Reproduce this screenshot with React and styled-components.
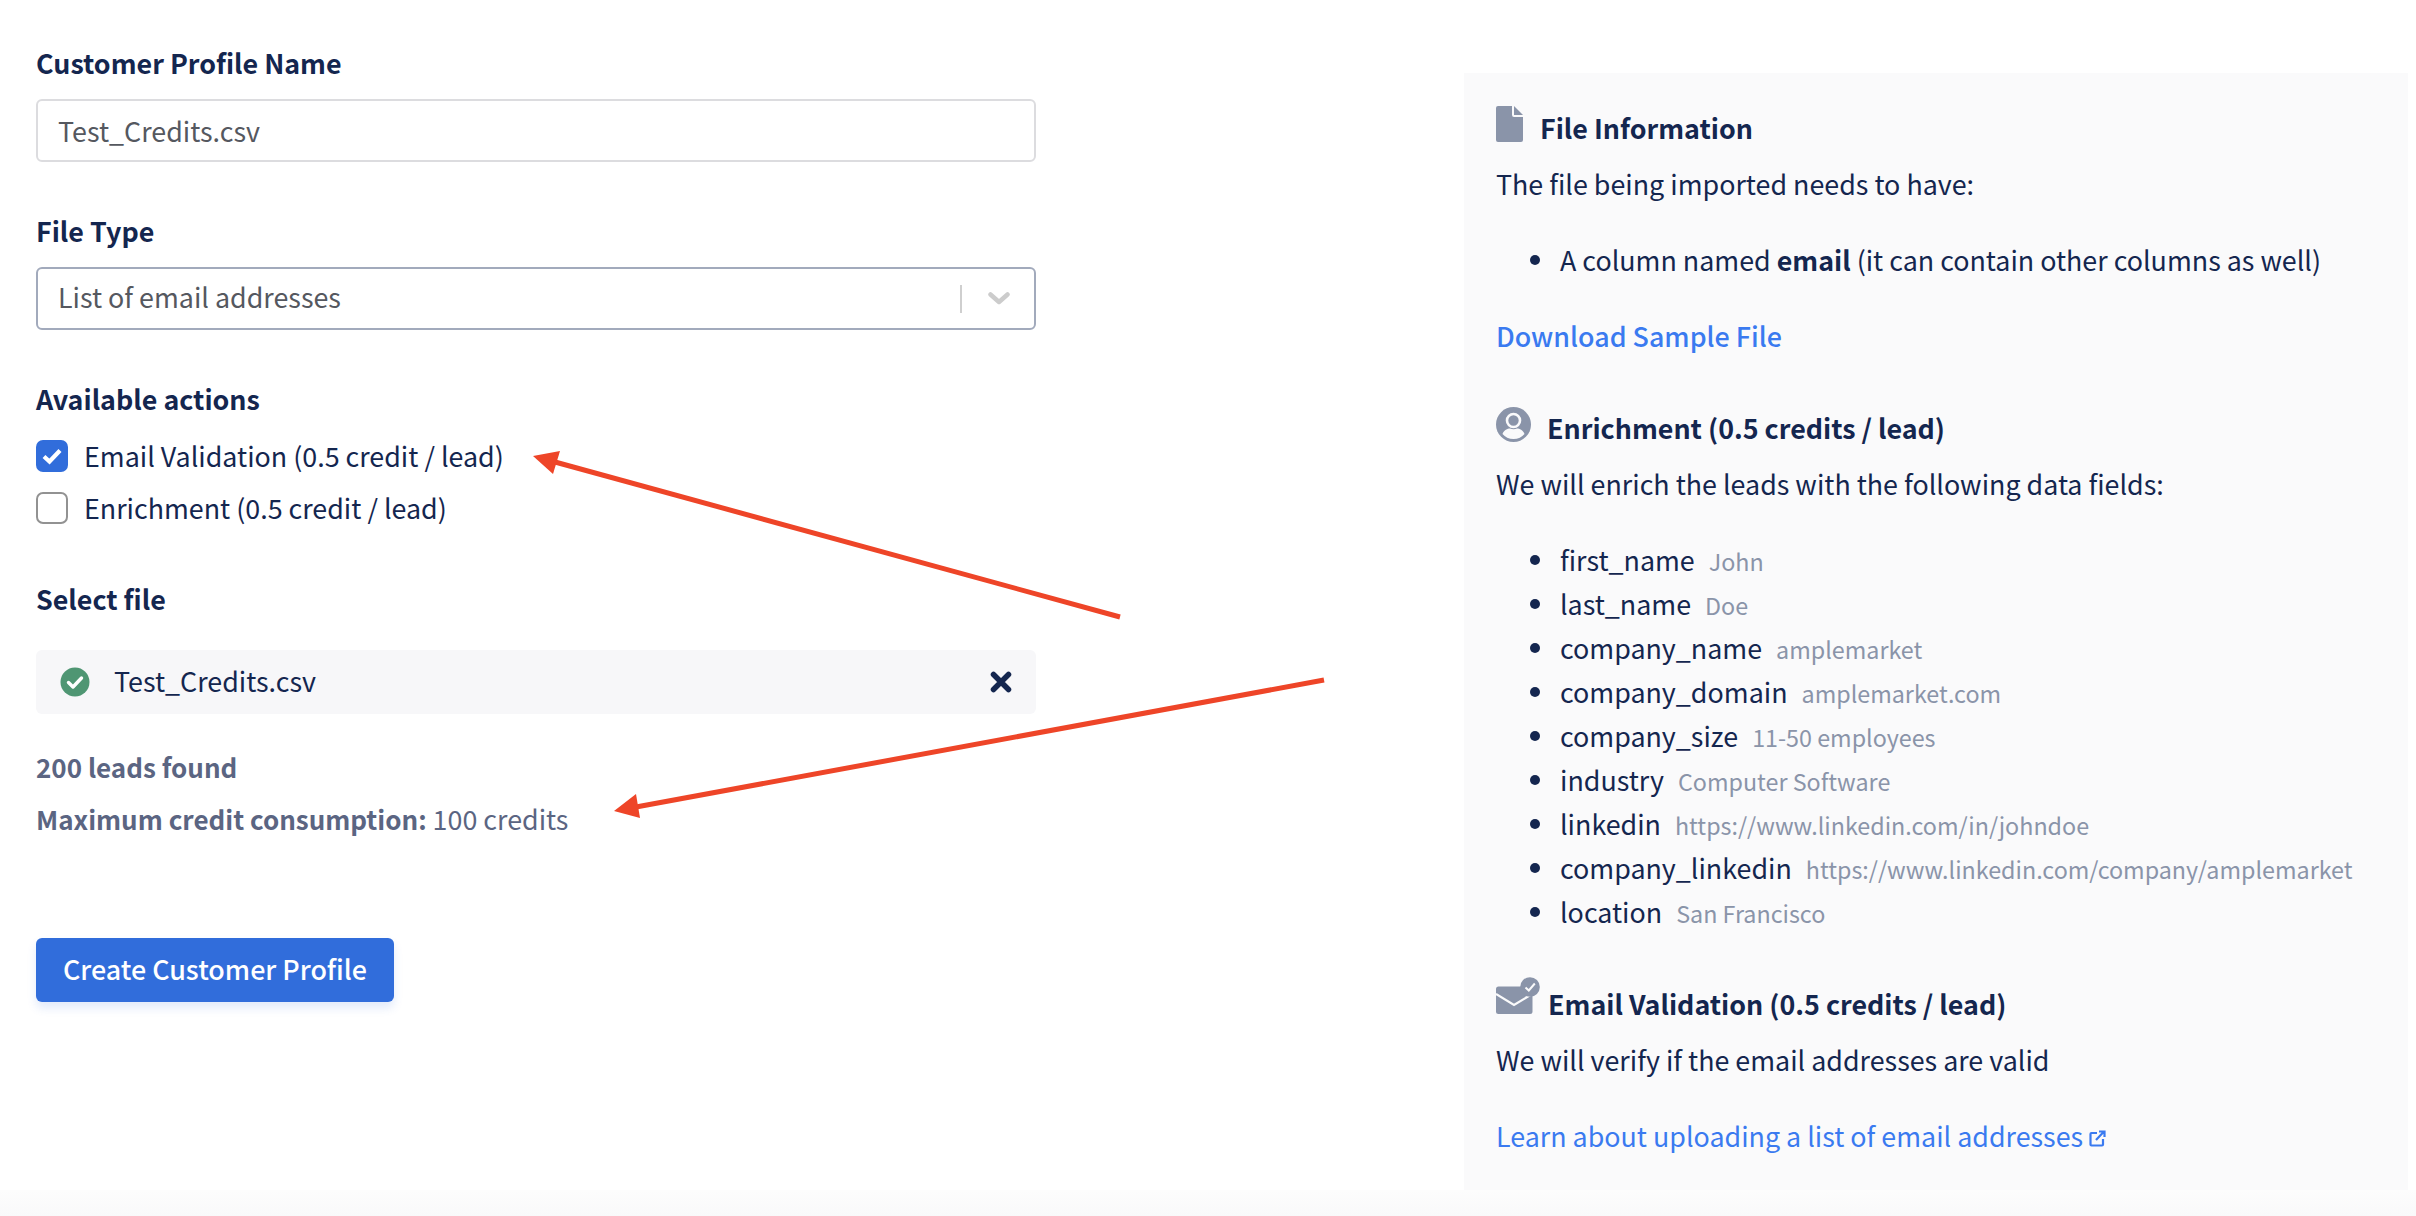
import React from 'react'
import styled, { createGlobalStyle } from 'styled-components'

const navy = '#14264f'
const muted = '#8a94a9'
const link = '#3a7af0'

const GlobalStyle = createGlobalStyle`
  html, body {
    margin: 0;
    padding: 0;
    background: #fff;
  }
  body {
    font-family: "Noto Sans CJK SC", "Noto Sans", sans-serif;
    font-size: 26.85px;
    line-height: 36px;
    color: ${navy};
  }
  * {
    box-sizing: border-box;
  }
`

const Page = styled.div`
  position: relative;
  width: 2416px;
  height: 1216px;
  overflow: hidden;
  display: flex;
  flex-direction: column;
`

const Columns = styled.div`
  display: flex;
  justify-content: space-between;
  padding: 0 8px 0 36px;
  height: 1190px;
`

const FormColumn = styled.div`
  width: 1000px;
  padding-top: 45px;
`

const BottomFade = styled.div`
  flex: 1;
  background: linear-gradient(#fdfdfd, #f9f9fa);
`

const Label = styled.div`
  font-weight: 700;
  line-height: 36px;
  margin-top: ${p => p.$top || 0}px;
`

const TextInput = styled.input`
  display: block;
  width: 100%;
  height: 63px;
  margin-top: 18px;
  padding: 0 20px;
  border: 2px solid #dcdcdf;
  border-radius: 6px;
  outline: none;
  background: #fff;
  font: inherit;
  color: #55585f;
`

const SelectBox = styled.div`
  display: flex;
  align-items: center;
  height: 63px;
  margin-top: 18px;
  padding: 0 24px 0 20px;
  border: 2px solid #a2aabc;
  border-radius: 6px;
  color: #55585f;
`

const SelectValue = styled.span`
  flex: 1;
  margin-bottom: 3px;
`

const Separator = styled.span`
  width: 2px;
  height: 28px;
  margin-right: 26px;
  background: #cfcfcf;
`

const Checks = styled.div`
  display: flex;
  flex-direction: column;
  gap: 20px;
  margin-top: 23px;
`

const CheckRow = styled.label`
  display: flex;
  align-items: center;
  gap: 16px;
  height: 32px;
`

const CheckBox = styled.span`
  display: flex;
  align-items: center;
  justify-content: center;
  width: 32px;
  height: 32px;
  border-radius: 7px;
  background: ${p => (p.$checked ? '#316ddb' : '#fff')};
  border: ${p => (p.$checked ? 'none' : '2px solid #929292')};
`

const FileRow = styled.div`
  display: flex;
  align-items: center;
  height: 64px;
  margin-top: 33px;
  padding: 0 24px;
  border-radius: 6px;
  background: #f7f7f9;
`

const FileName = styled.span`
  flex: 1;
  margin-left: 24px;
  margin-bottom: 3px;
`

const Summary = styled.div`
  color: #5b6582;
  line-height: 36px;
  margin-top: ${p => p.$top}px;

  b {
    font-weight: 700;
    font-size: 26px;
  }
`

const PrimaryButton = styled.button`
  display: block;
  width: 358px;
  height: 64px;
  margin-top: 101px;
  padding: 0 0 3px;
  border: none;
  border-radius: 6px;
  background: #316ddb;
  box-shadow: 0 6px 10px rgba(49, 109, 219, 0.14);
  color: #fff;
  font: inherit;
  font-weight: 500;
`

const InfoPanel = styled.aside`
  width: 944px;
  height: 1117px;
  margin-top: 73px;
  padding: 33px 32px 36px;
  background: #fafafb;
`

const SectionHead = styled.div`
  display: flex;
  align-items: flex-start;
  gap: ${p => p.$gap}px;
  margin-top: ${p => p.$top || 0}px;
`

const SectionTitle = styled.h3`
  margin: 0;
  padding-top: ${p => p.$drop}px;
  font-size: 26.85px;
  font-weight: 700;
  line-height: 36px;
`

const Para = styled.p`
  margin: 20px 0 0;
  line-height: 36px;
`

const BulletList = styled.ul`
  margin: ${p => p.$top}px 0 0;
  padding: 0 0 0 64px;
  list-style: none;
`

const Bullet = styled.li`
  position: relative;
  line-height: ${p => p.$height}px;
  white-space: nowrap;

  &::before {
    content: '';
    position: absolute;
    left: -30px;
    top: calc(50% - 5px);
    width: 10px;
    height: 10px;
    border-radius: 50%;
    background: ${navy};
  }

  b {
    font-weight: 700;
  }
`

const Example = styled.span`
  margin-left: 14px;
  font-size: 23.3px;
  line-height: 1;
  color: ${muted};
`

const InfoLink = styled.a`
  display: block;
  margin-top: 40px;
  line-height: 36px;
  color: ${link};
  font-weight: ${p => (p.$strong ? 500 : 400)};
`

const ArrowLayer = styled.svg`
  position: absolute;
  left: 0;
  top: 0;
  pointer-events: none;
`

const Tick = () => (
  <svg width="22" height="18" viewBox="0 0 22 18">
    <path d="M3 9.5l5.5 5L19 3.5" fill="none" stroke="#fff" strokeWidth="4.2" />
  </svg>
)

const Chevron = () => (
  <svg width="22" height="13" viewBox="0 0 22 13">
    <path d="M2.5 2.5L11 10l8.500-7.500" fill="none" stroke="#cccccc" strokeWidth="4.500" strokeLinecap="round" strokeLinejoin="round" />
  </svg>
)

const GreenCheck = () => (
  <svg width="30" height="30" viewBox="0 0 30 30">
    <circle cx="15" cy="15" r="14.500" fill="#4f9673" />
    <path d="M8.500 15.500l4.500 4.500 8.500-9" fill="none" stroke="#fff" strokeWidth="3.400" strokeLinecap="round" strokeLinejoin="round" />
  </svg>
)

const Cross = () => (
  <svg width="22" height="22" viewBox="0 0 22 22">
    <path d="M3.500 3.500l15 15M18.500 3.500l-15 15" fill="none" stroke={navy} strokeWidth="5.500" strokeLinecap="round" />
  </svg>
)

const FileIcon = () => (
  <svg width="27" height="36" viewBox="0 0 27 36">
    <path d="M2 0h14v9a2 2 0 0 0 2 2h9v23a2 2 0 0 1-2 2H2a2 2 0 0 1-2-2V2a2 2 0 0 1 2-2z" fill="#8a94a9" />
    <path d="M18 0l9 9h-9z" fill="#8a94a9" />
  </svg>
)

const PersonIcon = () => (
  <svg width="35" height="35" viewBox="0 0 35 35">
    <circle cx="17.500" cy="17.500" r="17.500" fill="#8a94a9" />
    <circle cx="17.500" cy="13.500" r="6.500" fill="none" stroke="#fafafb" strokeWidth="2.600" />
    <path d="M6.500 27c1.500-4 5-5.500 7.500-5.500 2.200 1 5 1 7 0 2.500 0 6 1.500 7.500 5.500-2.500 3-6.500 5-11 5s-8.500-2-11-5z" fill="#fafafb" />
  </svg>
)

const MailCheckIcon = () => (
  <svg width="44" height="37" viewBox="0 0 44 37">
    <path d="M2.500 9.500h28a13 13 0 0 0 6 8.500v16.500a2.500 2.500 0 0 1-2.500 2.500H2.500A2.500 2.500 0 0 1 0 34.500V12a2.500 2.500 0 0 1 2.500-2.500z" fill="#8a94a9" />
    <path d="M0 17l18 11 18-11" fill="none" stroke="#fafafb" strokeWidth="2.200" />
    <circle cx="34" cy="10" r="9.800" fill="#8a94a9" />
    <path d="M29.500 10.500l3.300 3 6-7" fill="none" stroke="#fafafb" strokeWidth="2" />
  </svg>
)

const ExternalIcon = () => (
  <svg width="17" height="17" viewBox="0 0 17 17">
    <path d="M8 3H2.500A1 1 0 0 0 1.500 4v10.500a1 1 0 0 0 1 1H13a1 1 0 0 0 1-1V9M7 10l8-8.500M10 1.500h5.500V7" fill="none" stroke={link} strokeWidth="2.200" />
  </svg>
)

const Arrow = ({ line, head }) => (
  <>
    <path d={line} fill="none" stroke="#ee4528" strokeWidth="5" />
    <polygon points={head} fill="#ee4528" />
  </>
)

const fields = [
  ['first_name', 'John'],
  ['last_name', 'Doe'],
  ['company_name', 'amplemarket'],
  ['company_domain', 'amplemarket.com'],
  ['company_size', '11-50 employees'],
  ['industry', 'Computer Software'],
  ['linkedin', 'https://www.linkedin.com/in/johndoe'],
  ['company_linkedin', 'https://www.linkedin.com/company/amplemarket'],
  ['location', 'San Francisco'],
]

const App = () => {
  return (
    <Page>
      <GlobalStyle />
      <Columns>
        <FormColumn>
          <Label>Customer Profile Name</Label>
          <TextInput readOnly value="Test_Credits.csv" />

          <Label $top={51}>File Type</Label>
          <SelectBox>
            <SelectValue>List of email addresses</SelectValue>
            <Separator />
            <Chevron />
          </SelectBox>

          <Label $top={51}>Available actions</Label>
          <Checks>
            <CheckRow>
              <CheckBox $checked>
                <Tick />
              </CheckBox>
              Email Validation (0.5 credit / lead)
            </CheckRow>
            <CheckRow>
              <CheckBox />
              Enrichment (0.5 credit / lead)
            </CheckRow>
          </Checks>

          <Label $top={57}>Select file</Label>
          <FileRow>
            <GreenCheck />
            <FileName>Test_Credits.csv</FileName>
            <Cross />
          </FileRow>

          <Summary $top={35}>
            <b>200 leads found</b>
          </Summary>
          <Summary $top={16}>
            <b>Maximum credit consumption:</b> 100 credits
          </Summary>

          <PrimaryButton>Create Customer Profile</PrimaryButton>
        </FormColumn>

        <InfoPanel>
          <SectionHead $gap={17}>
            <FileIcon />
            <SectionTitle $drop={4}>File Information</SectionTitle>
          </SectionHead>
          <Para>The file being imported needs to have:</Para>
          <BulletList $top={40}>
            <Bullet $height={36}>
              A column named <b>email</b> (it can contain other columns as well)
            </Bullet>
          </BulletList>
          <InfoLink $strong>Download Sample File</InfoLink>

          <SectionHead $gap={16} $top={53}>
            <PersonIcon />
            <SectionTitle $drop={3}>Enrichment (0.5 credits / lead)</SectionTitle>
          </SectionHead>
          <Para>We will enrich the leads with the following data fields:</Para>
          <BulletList $top={36}>
            {fields.map(([name, sample]) => (
              <Bullet key={name} $height={44}>
                {name}
                <Example>{sample}</Example>
              </Bullet>
            ))}
          </BulletList>

          <SectionHead $gap={8} $top={43}>
            <MailCheckIcon />
            <SectionTitle $drop={9}>Email Validation (0.5 credits / lead)</SectionTitle>
          </SectionHead>
          <Para>We will verify if the email addresses are valid</Para>
          <InfoLink>
            Learn about uploading a list of email addresses <ExternalIcon />
          </InfoLink>
        </InfoPanel>
      </Columns>
      <BottomFade />

      <ArrowLayer width="2416" height="1216" viewBox="0 0 2416 1216">
        <Arrow line="M1120 617L555 462" head="533,456 560,451 553,474" />
        <Arrow line="M1324 680L636 807" head="614,811 636,794 640,818" />
      </ArrowLayer>
    </Page>
  )
}

export default App
